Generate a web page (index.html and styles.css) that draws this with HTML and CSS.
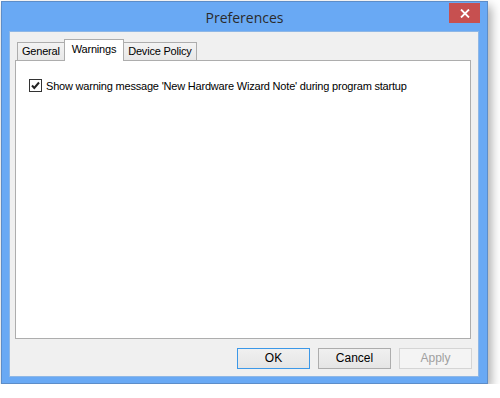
FILE: index.html
```html
<!DOCTYPE html>
<html lang="en">
<head>
  <meta charset="UTF-8">
  <title>Preferences</title>
  <link rel="stylesheet" href="styles.css">
</head>
<body>
  <div id="window">
    <div id="titlebar">
      <span id="title">Preferences</span>
      <div id="closeBtn">
        <svg width="10" height="9" viewBox="0 0 10 9">
          <path d="M1 0.5 L9 8.5 M9 0.5 L1 8.5" stroke="#fff" stroke-width="1.8"/>
        </svg>
      </div>
    </div>
    <div id="client">
      <div id="tabs">
        <div class="tab">General</div>
        <div class="tab selected">Warnings</div>
        <div class="tab">Device Policy</div>
      </div>
      <div id="panel">
        <label class="checkRow">
          <span class="checkBox">
            <svg width="11" height="11" viewBox="0 0 11 11">
              <path d="M2 5.5 L4.3 8 L9 2.5" fill="none" stroke="#222" stroke-width="2"/>
            </svg>
          </span>
          Show warning message 'New Hardware Wizard Note' during program startup
        </label>
      </div>
      <div id="buttons">
        <div class="btn default">OK</div>
        <div class="btn">Cancel</div>
        <div class="btn disabled">Apply</div>
      </div>
    </div>
  </div>
</body>
</html>
```

FILE: styles.css
```css
body {
  margin: 0;
  background-color: #ffffff;
  font-family: "Liberation Sans", Arial, sans-serif;
  font-size: 11px;
  letter-spacing: -0.2px;
  color: #000;
}

#window {
  margin: 1px 0 0 1px;
  width: 485px;
  height: 381px;
  background-color: #69a9f4;
  border: 1px solid #5d8dc8;
  box-shadow: 3px 5px 10px rgba(0, 0, 0, 0.35);
  display: flex;
  flex-direction: column;
}

#titlebar {
  height: 29px;
  position: relative;
  display: flex;
  justify-content: center;
  align-items: center;
}

#title {
  font-family: "Open Sans", sans-serif;
  font-size: 14px;
  letter-spacing: 0;
  color: #2b2b2b;
  margin-top: 2px;
}

#closeBtn {
  position: absolute;
  top: 1px;
  right: 7px;
  width: 31px;
  height: 20px;
  background-color: #c75050;
  display: flex;
  justify-content: center;
  align-items: center;
}

#client {
  margin: 0 8px 6px 7px;
  height: 346px;
  background-color: #f0f0f0;
  border: 1px solid #8eb7e6;
  box-sizing: border-box;
  display: flex;
  flex-direction: column;
  padding: 7px 7px 0 5px;
}

#tabs {
  display: flex;
  align-items: flex-end;
  padding-left: 2px;
  height: 21px;
}

.tab {
  height: 18px;
  line-height: 17px;
  padding: 0 4px;
  border: 1px solid #adadad;
  border-bottom: none;
  box-sizing: border-box;
  background: linear-gradient(#f3f3f3, #e8e8e8);
  margin-right: -1px;
}

.tab.selected {
  height: 22px;
  line-height: 18px;
  padding: 0 7px;
  background: #fff;
  margin-bottom: -1px;
  position: relative;
  z-index: 1;
}

#panel {
  height: 279px;
  background-color: #fff;
  border: 1px solid #adadad;
  box-sizing: border-box;
  padding: 18px 0 0 13px;
}

.checkRow {
  display: flex;
  align-items: center;
  gap: 4px;
}

.checkBox {
  width: 13px;
  height: 13px;
  border: 1px solid #333;
  box-sizing: border-box;
  display: flex;
  justify-content: center;
  align-items: center;
  background: #fff;
}

#buttons {
  display: flex;
  justify-content: flex-end;
  gap: 8px;
  margin-top: 9px;
  margin-right: -1px;
}

.btn {
  width: 73px;
  height: 21px;
  line-height: 19px;
  text-align: center;
  border: 1px solid #adadad;
  box-sizing: border-box;
  background: linear-gradient(#f0f0f0, #e5e5e5);
  font-size: 12px;
  letter-spacing: 0;
}

.btn.default {
  border-color: #3c98e8;
}

.btn.disabled {
  color: #a0a0a0;
  border-color: #d5d5d5;
  background: #f4f4f4;
}
```
